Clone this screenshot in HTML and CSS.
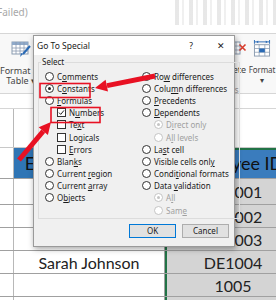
FILE: index.html
```html
<!DOCTYPE html>
<html lang="en">
<head>
    <meta charset="UTF-8">
    <title>Go To Special</title>
    <link rel="stylesheet" href="styles.css">
</head>
<body>

    <div class="screen">

        <div class="topBar">
            <span class="failed">Failed)</span>
            <div class="fadedIcons"></div>
        </div>

        <div class="ribbon">
            <div class="rbGroup rbLeft">
                <svg class="rbIcon" width="20" height="17" viewBox="0 0 20 17">
                    <rect x="1" y="1" width="16" height="12" fill="#fff" stroke="#8a9bb0"/>
                    <rect x="1" y="1" width="16" height="3" fill="#8fa9c9"/>
                    <path d="M1 7h16M1 10h16M5 1v12M9 1v12M13 1v12" stroke="#8a9bb0" stroke-width="0.8"/>
                    <path d="M19 5l-7 8" stroke="#2a6ab5" stroke-width="2"/>
                    <path d="M12 13l-3 3 1-4z" fill="#2a6ab5"/>
                </svg>
                <span class="rbText">Format as</span>
                <span class="rbText">Table ▾</span>
            </div>
            <div class="rbRight">
                <div class="rbCells">
                    <div class="rbGroup delGroup">
                        <svg class="rbIcon" width="20" height="17" viewBox="0 0 20 17">
                            <rect x="1" y="2" width="12" height="12" fill="#fff" stroke="#8a9bb0"/>
                            <path d="M1 6h12M1 10h12M5 2v12M9 2v12" stroke="#8a9bb0" stroke-width="0.8"/>
                            <path d="M12.5 4.5l6 6M18.5 4.5l-6 6" stroke="#d83b2b" stroke-width="1.6"/>
                        </svg>
                        <span class="rbText">Delete</span>
                        <span class="rbText">&nbsp;</span>
                    </div>
                    <div class="rbGroup fmtGroup">
                        <svg class="rbIcon" width="20" height="17" viewBox="0 0 20 18">
                            <path d="M2 2h16" stroke="#2a6ab5" stroke-width="1"/>
                            <path d="M2 0v4M18 0v4" stroke="#2a6ab5" stroke-width="1"/>
                            <path d="M4 2l2-1.5v3zM16 2l-2-1.5v3z" fill="#2a6ab5"/>
                            <rect x="2" y="5" width="16" height="12" fill="#fff" stroke="#8a9bb0"/>
                            <path d="M2 9h16M2 13h16M7 5v12M13 5v12" stroke="#8a9bb0" stroke-width="0.8"/>
                            <rect x="7" y="9" width="6" height="4" fill="#2a6ab5"/>
                        </svg>
                        <span class="rbText">Format</span>
                        <span class="rbText">▾</span>
                    </div>
                </div>
                <span class="rbLabel">Cells</span>
            </div>
        </div>

        <div class="formulaBar"></div>

        <div class="sheet">
            <div class="row rowTop"><div class="c0"></div><div class="c1"></div><div class="c2"></div></div>
            <div class="row rowHead"><div class="c0"></div><div class="c1 head">Employee Name</div><div class="c2 head sel selTop">Employee ID</div></div>
            <div class="row rowFirst"><div class="c0"></div><div class="c1"></div><div class="c2 sel">DE1001</div></div>
            <div class="row"><div class="c0"></div><div class="c1"></div><div class="c2 sel">DE1002</div></div>
            <div class="row"><div class="c0"></div><div class="c1"></div><div class="c2 sel">DE1003</div></div>
            <div class="row"><div class="c0"></div><div class="c1">Sarah Johnson</div><div class="c2 sel">DE1004</div></div>
            <div class="row"><div class="c0"></div><div class="c1"></div><div class="c2 sel">1005</div></div>
            <div class="row"><div class="c0"></div><div class="c1"></div><div class="c2 sel"></div></div>
        </div>

        <div class="dialog">
            <div class="dlgTitle">
                <span class="dlgName">Go To Special</span>
                <span class="dlgHelp">?</span>
                <span class="dlgClose">✕</span>
            </div>
            <div class="dlgBody">
                <fieldset class="group">
                    <legend>Select</legend>
                    <div class="cols">
                        <div class="col">
                            <div class="opt"><span class="radio"></span><span>C<u>o</u>mments</span></div>
                            <div class="opt"><span class="radio on"></span><span>C<u>o</u>nstants</span></div>
                            <div class="opt"><span class="radio"></span><span><u>F</u>ormulas</span></div>
                            <div class="opt sub"><span class="check on">
                                <svg width="7" height="7" viewBox="0 0 7 7"><path d="M1 3.6l1.7 1.8L6 1.4" fill="none" stroke="#222" stroke-width="1"/></svg>
                            </span><span>N<u>u</u>mbers</span></div>
                            <div class="opt sub"><span class="check"></span><span>Te<u>x</u>t</span></div>
                            <div class="opt sub"><span class="check"></span><span>Lo<u>g</u>icals</span></div>
                            <div class="opt sub"><span class="check"></span><span><u>E</u>rrors</span></div>
                            <div class="opt"><span class="radio"></span><span>Blan<u>k</u>s</span></div>
                            <div class="opt"><span class="radio"></span><span>Current <u>r</u>egion</span></div>
                            <div class="opt"><span class="radio"></span><span>Current <u>a</u>rray</span></div>
                            <div class="opt"><span class="radio"></span><span>O<u>b</u>jects</span></div>
                        </div>
                        <div class="col">
                            <div class="opt"><span class="radio"></span><span>Ro<u>w</u> differences</span></div>
                            <div class="opt"><span class="radio"></span><span>Colu<u>m</u>n differences</span></div>
                            <div class="opt"><span class="radio"></span><span><u>P</u>recedents</span></div>
                            <div class="opt"><span class="radio"></span><span><u>D</u>ependents</span></div>
                            <div class="opt sub off"><span class="radio on"></span><span>D<u>i</u>rect only</span></div>
                            <div class="opt sub off"><span class="radio"></span><span>A<u>l</u>l levels</span></div>
                            <div class="opt"><span class="radio"></span><span>La<u>s</u>t cell</span></div>
                            <div class="opt"><span class="radio"></span><span>Visible cells onl<u>y</u></span></div>
                            <div class="opt"><span class="radio"></span><span>Condi<u>t</u>ional formats</span></div>
                            <div class="opt"><span class="radio"></span><span>Data <u>v</u>alidation</span></div>
                            <div class="opt sub off"><span class="radio on"></span><span>A<u>l</u>l</span></div>
                            <div class="opt sub off"><span class="radio"></span><span>Sam<u>e</u></span></div>
                        </div>
                    </div>
                </fieldset>
                <div class="buttons">
                    <button class="btn primary">OK</button>
                    <button class="btn">Cancel</button>
                </div>
            </div>
        </div>

        <svg class="marks" width="276" height="300" viewBox="0 0 276 300">
            <rect x="40" y="83.5" width="50" height="14" fill="none" stroke="#e81123" stroke-width="1.6"/>
            <rect x="51" y="107.5" width="49" height="15" fill="none" stroke="#e81123" stroke-width="1.6"/>
            <path d="M155 76L107 85.6" stroke="#e81123" stroke-width="5"/>
            <path d="M95 88L108 91.5L105.6 79.8z" fill="#e81123"/>
            <path d="M19 160L43.3 131.2" stroke="#e81123" stroke-width="5"/>
            <path d="M51 122L47.9 135.1L38.7 127.3z" fill="#e81123"/>
        </svg>

    </div>

</body>
</html>
```

FILE: styles.css
```css
body {
    margin: 0;
    font-family: 'Noto Sans', sans-serif;
    background-color: #fff;
}

.screen {
    position: relative;
    width: 276px;
    height: 300px;
    overflow: hidden;
    background-color: #fff;
}

/* ribbon */
.topBar {
    height: 33px;
    display: flex;
    justify-content: space-between;
    border-bottom: 1px solid #d6d6d6;
}

.failed {
    font-size: 10px;
    color: #a8a8a8;
    margin-top: 5px;
    margin-left: -3px;
}

.fadedIcons {
    width: 106px;
    height: 25px;
    background: repeating-linear-gradient(90deg, #fff 0, #fff 5px, #e2e2e2 5px, #e2e2e2 9px, #fff 9px, #fff 12px, #ececec 12px, #ececec 14px);
    opacity: 0.8;
}

.ribbon {
    height: 59px;
    display: flex;
    justify-content: space-between;
    background-color: #f8f8f8;
    border-bottom: 1px solid #d6d6d6;
}

.rbGroup {
    display: flex;
    flex-direction: column;
    align-items: center;
    font-size: 9px;
    color: #444;
    line-height: 10px;
}

.rbLeft {
    padding-top: 7px;
}

.rbIcon {
    margin-bottom: 8px;
}

.rbRight {
    display: flex;
    flex-direction: column;
    align-items: flex-start;
    padding-top: 6px;
}

.rbCells {
    display: flex;
    gap: 2px;
}

.delGroup {
    width: 27px;
}

.delGroup .rbIcon {
    margin-left: 8px;
}

.fmtGroup {
    width: 28px;
    font-size: 8px;
    letter-spacing: -0.1px;
}

.rbLabel {
    font-size: 8px;
    color: #999;
    margin-left: 2px;
    line-height: 10px;
}

.formulaBar {
    height: 14px;
    border-bottom: 1px solid #d6d6d6;
}

/* sheet */
.sheet {
    width: 320px;
    font-family: 'Lato', sans-serif;
    font-size: 16px;
    color: #222;
}

.row {
    display: flex;
    height: 22px;
    border-bottom: 1px solid #a0a0a0;
}

.rowTop {
    height: 38px;
    border-bottom: 1px solid #c8c8c8;
}

.rowHead {
    height: 30px;
}

.rowFirst {
    height: 25px;
}

.c0 {
    width: 13px;
    border-right: 1px solid #b8b8b8;
}

.c1 {
    width: 150px;
    border-right: 1px solid #a0a0a0;
    display: flex;
    align-items: center;
    justify-content: center;
}

.c2 {
    width: 132px;
    display: flex;
    align-items: center;
    justify-content: center;
}

.head {
    background-color: #2f75b5;
    color: #111;
    font-size: 18px;
}

.sel {
    background-color: #d4d4d4;
    border-left: 2px solid #217346;
}

.head.sel {
    background-color: #3a7cbd;
}

.selTop {
    box-shadow: inset 0 2px 0 #217346;
}

/* dialog */
.dialog {
    position: absolute;
    left: 33px;
    top: 35px;
    width: 200px;
    height: 210px;
    border: 1px solid #9a9a9a;
    background-color: #f0f0f0;
    box-shadow: 1px 2px 6px rgba(0, 0, 0, 0.35);
    font-size: 8px;
    color: #1a1a1a;
}

.dlgTitle {
    height: 19px;
    display: flex;
    align-items: center;
    background-color: #fff;
    padding-left: 3px;
    font-size: 8.5px;
}

.dlgName {
    flex: 1;
}

.dlgHelp {
    width: 16px;
    text-align: center;
    margin-right: 14px;
}

.dlgClose {
    width: 16px;
    text-align: center;
    margin-right: 5px;
    font-size: 9px;
}

.dlgBody {
    padding: 2px 4px 0 4px;
}

.group {
    margin: 0;
    padding: 3px 0 2px 6px;
    border: 1px solid #dcdcdc;
}

.group legend {
    padding: 0 1px;
    margin-left: -4px;
    line-height: 10px;
}

.cols {
    display: flex;
}

.col {
    width: 97px;
    display: flex;
    flex-direction: column;
}

.opt {
    height: 12.2px;
    display: flex;
    align-items: center;
    gap: 3px;
    white-space: nowrap;
}

.opt.sub {
    padding-left: 12px;
}

.opt.off {
    color: #a0a0a0;
}

.radio {
    width: 7px;
    height: 7px;
    border: 1px solid #333;
    border-radius: 50%;
    background-color: #fff;
    position: relative;
    flex-shrink: 0;
}

.radio.on::after {
    content: '';
    position: absolute;
    left: 2px;
    top: 2px;
    width: 3px;
    height: 3px;
    border-radius: 50%;
    background-color: #222;
}

.off .radio {
    border-color: #c4c4c4;
}

.off .radio.on::after {
    background-color: #c4c4c4;
}

.check {
    width: 7px;
    height: 7px;
    border: 1px solid #333;
    background-color: #fff;
    display: flex;
    flex-shrink: 0;
}

.buttons {
    display: flex;
    justify-content: flex-end;
    gap: 6px;
    margin-top: 5px;
    padding-right: 1px;
}

.btn {
    width: 47px;
    height: 14px;
    padding: 0;
    font-family: 'Noto Sans', sans-serif;
    font-size: 8px;
    line-height: 12px;
    color: #1a1a1a;
    background-color: #e1e1e1;
    border: 1px solid #adadad;
}

.btn.primary {
    border-color: #0078d7;
}

.marks {
    position: absolute;
    left: 0;
    top: 0;
}
```
